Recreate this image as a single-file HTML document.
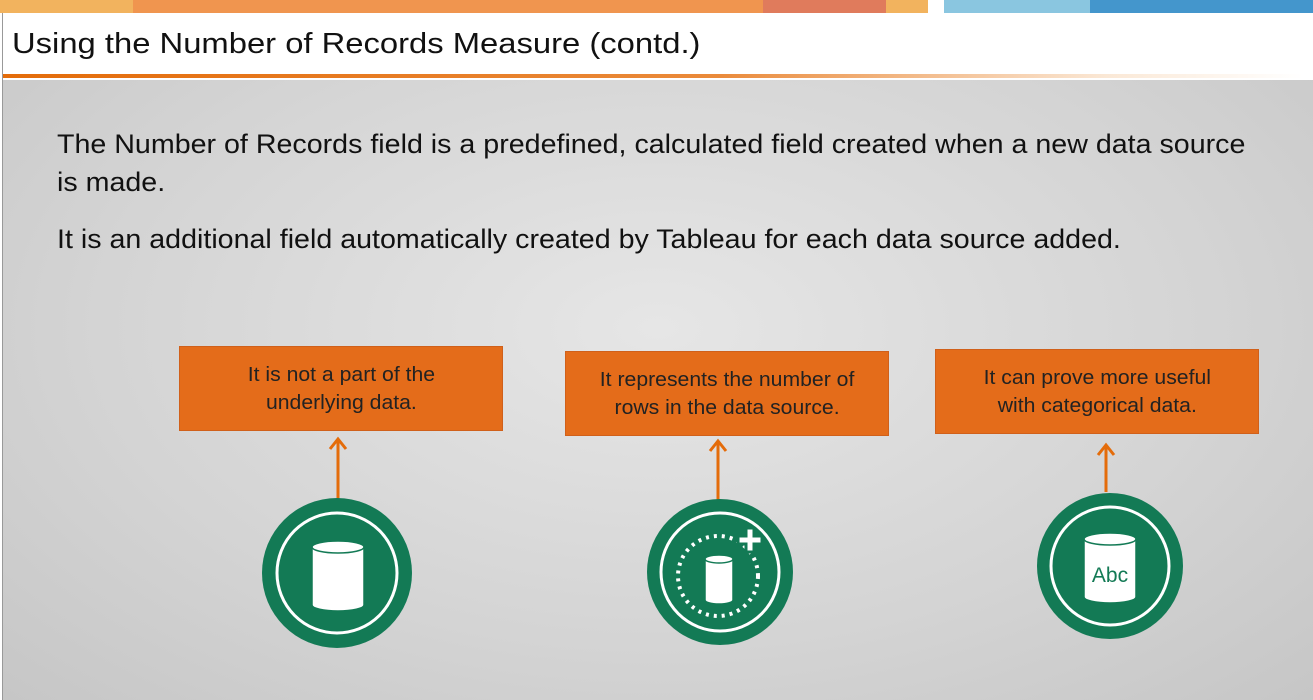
<!DOCTYPE html>
<html><head><meta charset="utf-8"><style>
*{margin:0;padding:0;box-sizing:border-box}
body{width:1313px;height:700px;overflow:hidden;background:#fff;font-family:"Liberation Sans",sans-serif;position:relative}
.bar{position:absolute;top:0;height:13px}
.title{position:absolute;left:12px;top:28px;font-size:29px;color:#111;white-space:nowrap;transform-origin:left top;transform:scaleX(1.13)}
.line{position:absolute;left:3px;top:74px;width:1300px;height:4px;background:linear-gradient(to right,#e46c0a 0%,#ea8a3a 55%,rgba(240,180,120,0.3) 85%,rgba(255,255,255,0) 100%)}
.gray{position:absolute;left:3px;top:80px;width:1310px;height:620px;background:radial-gradient(ellipse at 50% 40%,#e6e6e6 0%,#d4d4d4 60%,#c6c6c6 100%)}
.lb{position:absolute;left:2px;top:13px;width:1px;height:687px;background:#999}
.t{position:absolute;left:57px;font-size:27px;color:#111;white-space:nowrap;transform-origin:left top;transform:scaleX(1.06)}
.box{position:absolute;width:324px;background:#e46c1a;border:1px solid #d0601a;color:#222;font-size:20px;text-align:center;line-height:28px;padding-top:14px}
.box span{display:inline-block;transform:scaleX(1.06)}
svg{position:absolute;left:0;top:0}
</style></head><body>
<div class="bar" style="left:0;width:133px;background:#f2b35e"></div>
<div class="bar" style="left:133px;width:630px;background:#f0954f"></div>
<div class="bar" style="left:763px;width:123px;background:#e07b5c"></div>
<div class="bar" style="left:886px;width:42px;background:#f2b35e"></div>
<div class="bar" style="left:944px;width:146px;background:#8ac6e0"></div>
<div class="bar" style="left:1090px;width:223px;background:#4496cc"></div>
<div class="title">Using the Number of Records Measure (contd.)</div>
<div class="line"></div>
<div class="gray"></div>
<div class="lb"></div>
<div class="t" style="top:129px">The Number of Records field is a predefined, calculated field created when a new data source</div>
<div class="t" style="top:167px">is made.</div>
<div class="t" style="top:224px">It is an additional field automatically created by Tableau for each data source added.</div>
<div class="box" style="left:179px;top:346px;height:85px"><span>It is not a part of the<br>underlying data.</span></div>
<div class="box" style="left:565px;top:351px;height:85px"><span>It represents the number of<br>rows in the data source.</span></div>
<div class="box" style="left:935px;top:349px;height:85px"><span>It can prove more useful<br>with categorical data.</span></div>
<svg width="1313" height="700">
<g stroke="#e46c0a" stroke-width="3" fill="none">
<path d="M338 500V440M330 449L338 439L346 449"/>
<path d="M718 500V442M710 451L718 441L726 451"/>
<path d="M1106 492V446M1098 455L1106 445L1114 455"/>
</g>
<g fill="#137a55"><circle cx="337" cy="573" r="75"/><circle cx="720" cy="572" r="73"/><circle cx="1110" cy="566" r="73"/></g>
<g fill="none" stroke="#fff" stroke-width="3"><circle cx="337" cy="573" r="60"/><circle cx="720" cy="572" r="59"/><circle cx="1110" cy="566" r="59"/></g>
<circle cx="718" cy="576" r="40" fill="none" stroke="#fff" stroke-width="4" stroke-dasharray="3 5"/>
<path d="M738 536h8v-8h8v8h8v8h-8v8h-8v-8h-8z" fill="#fff" stroke="#137a55" stroke-width="3"/>
<g fill="#fff" stroke="#137a55" stroke-width="1.5">
<path d="M312 547v58a26 6 0 0 0 52 0v-58z"/><ellipse cx="338" cy="547" rx="26" ry="6"/>
<path d="M705 559v41a14 4 0 0 0 28 0v-41z"/><ellipse cx="719" cy="559" rx="14" ry="4"/>
<path d="M1084 539v58a26 6 0 0 0 52 0v-58z"/><ellipse cx="1110" cy="539" rx="26" ry="6"/>
</g>
<text x="1110" y="582" text-anchor="middle" font-family="Liberation Sans" font-size="21" fill="#137a55">Abc</text>
</svg>
</body></html>
